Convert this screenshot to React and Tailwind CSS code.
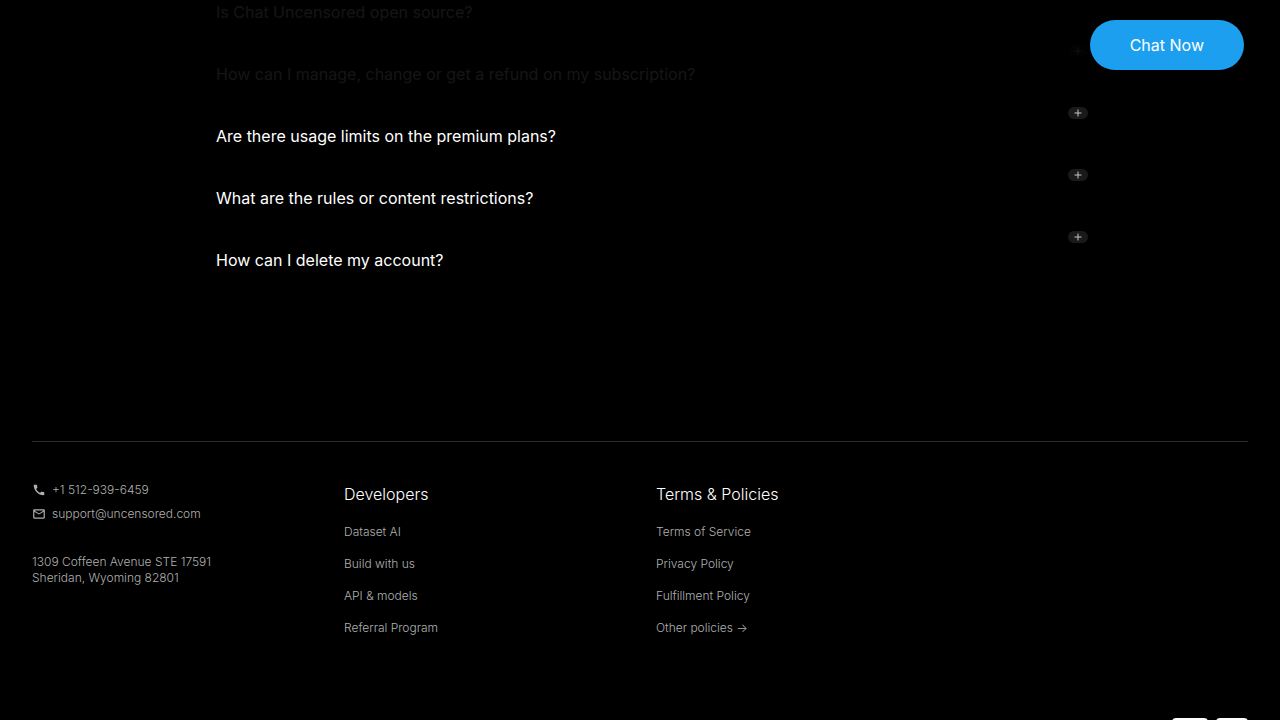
import React, { useState } from 'react';
import { MdCall, MdOutlineEmail } from 'react-icons/md';

const questions = [
  'Is Chat Uncensored open source?',
  'How can I manage, change or get a refund on my subscription?',
  'Are there usage limits on the premium plans?',
  'What are the rules or content restrictions?',
  'How can I delete my account?',
];

const linkGroups = [
  {
    title: 'Developers',
    links: ['Dataset AI', 'Build with us', 'API & models', 'Referral Program'],
  },
  {
    title: 'Terms & Policies',
    links: ['Terms of Service', 'Privacy Policy', 'Fulfillment Policy', 'Other policies →'],
  },
];

function Header() {
  return (
    <header className="fixed inset-x-0 top-0 z-10 flex h-[90px] items-start justify-end bg-black/92 px-9 pt-5">
      <button className="h-[50px] rounded-full bg-[#1d9ff0] px-10 text-base text-white">Chat Now</button>
    </header>
  );
}

function Faq() {
  const [open, setOpen] = useState(null);

  return (
    <section className="mx-auto -mt-[18px] w-full max-w-[896px] pl-6">
      {questions.map((question, index) => (
        <button
          key={question}
          aria-expanded={open === index}
          onClick={() => setOpen(open === index ? null : index)}
          className="flex w-full items-start justify-between pt-px pb-5 text-left"
        >
          <span className="pt-[17px] text-base text-white">{question}</span>
          <span className="flex h-3 w-5 items-center justify-center rounded-full bg-[#1a1a1a]">
            <svg viewBox="0 0 8 8" className="h-2 w-2" stroke="#c4c4c4" strokeWidth="1">
              <path d="M4 0.5v7M0.5 4h7" />
            </svg>
          </span>
        </button>
      ))}
    </section>
  );
}

function Footer() {
  return (
    <footer className="mt-[149px] px-8 font-light">
      <div className="grid grid-cols-4 gap-8 border-t border-[#2a2a2a] pt-10">
        <div className="text-xs text-[#b0b0b0]">
          <a href="#phone" className="flex items-center gap-1.5">
            <MdCall className="h-3.5 w-3.5" />
            +1 512-939-6459
          </a>
          <a href="#email" className="mt-2 flex items-center gap-1.5">
            <MdOutlineEmail className="h-3.5 w-3.5" />
            support@uncensored.com
          </a>
          <address className="mt-8 not-italic">
            1309 Coffeen Avenue STE 17591
            <br />
            Sheridan, Wyoming 82801
          </address>
        </div>
        {linkGroups.map((group) => (
          <nav key={group.title}>
            <h3 className="text-base text-white">{group.title}</h3>
            <ul className="mt-[18px] space-y-4 text-xs text-[#b0b0b0]">
              {group.links.map((link) => (
                <li key={link}>
                  <a href="#policies">{link}</a>
                </li>
              ))}
            </ul>
          </nav>
        ))}
      </div>
      <div className="mt-[82px] flex justify-end gap-2">
        <div className="h-6 w-9 rounded bg-white" />
        <div className="h-6 w-8 rounded bg-white" />
      </div>
    </footer>
  );
}

export default function App() {
  return (
    <div className="h-screen overflow-hidden bg-black font-['Inter',sans-serif]">
      <Header />
      <Faq />
      <Footer />
    </div>
  );
}
